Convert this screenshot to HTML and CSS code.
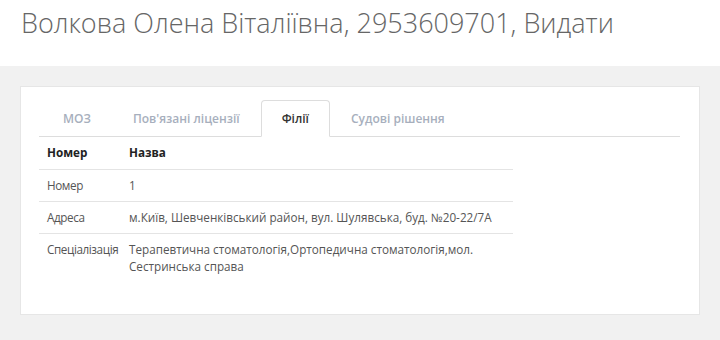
FILE: index.html
```html
<!DOCTYPE html>
<html lang="uk">
<head>
    <meta charset="UTF-8">
    <meta name="viewport" content="width=device-width, initial-scale=1.0">
    <title>Волкова Олена Віталіївна</title>
    <link rel="stylesheet" href="styles.css">
</head>
<body>
    <!-- Page header -->
    <div class="page-header">
        <h1>Волкова Олена Віталіївна, 2953609701, Видати</h1>
    </div>

    <div class="content">
        <div class="panel">
            <!-- Tabs -->
            <ul class="tabs">
                <li><a href="#">МОЗ</a></li>
                <li><a href="#">Пов'язані ліцензії</a></li>
                <li class="active"><a href="#">Філії</a></li>
                <li><a href="#">Судові рішення</a></li>
            </ul>

            <table class="info-table">
                <colgroup>
                    <col class="label-col">
                    <col>
                </colgroup>
                <thead>
                    <tr>
                        <th>Номер</th>
                        <th>Назва</th>
                    </tr>
                </thead>
                <tbody>
                    <tr>
                        <td>Номер</td>
                        <td>1</td>
                    </tr>
                    <tr>
                        <td>Адреса</td>
                        <td>м.Київ, Шевченківський район, вул. Шулявська, буд. №20-22/7А</td>
                    </tr>
                    <tr>
                        <td>Спеціалізація</td>
                        <td>Терапевтична стоматологія,Ортопедична стоматологія,мол. Сестринська справа</td>
                    </tr>
                </tbody>
            </table>
        </div>
    </div>
</body>
</html>
```
FILE: styles.css
```css
body {
    margin: 0;
    padding: 0;
    font-family: "Open Sans", Arial, sans-serif;
    background-color: #f1f1f1;
    color: #555;
}
.page-header {
    background-color: #fff;
    height: 66px;
    padding: 0 21px;
    box-sizing: border-box;
}
.page-header h1 {
    margin: 0;
    padding-top: 4px;
    font-size: 27px;
    font-weight: 300;
    color: #666;
    line-height: 38px;
}
.content {
    padding: 20px 20px 24px 20px;
}
.panel {
    background-color: #fff;
    border: 1px solid #e6e6e6;
    padding: 13px 19px 32px 18px;
}

/* Tabs */
.tabs {
    list-style: none;
    margin: 0;
    padding: 0 0 0 3px;
    display: flex;
    border-bottom: 1px solid #ddd;
}
.tabs li {
    margin-bottom: -1px;
}
.tabs a {
    display: block;
    height: 35px;
    line-height: 35px;
    padding: 0 20px;
    font-size: 12px;
    font-weight: 600;
    color: #a7afbd;
    text-decoration: none;
    border: 1px solid transparent;
    border-radius: 4px 4px 0 0;
}
.tabs .active a {
    color: #333;
    background-color: #fff;
    border-color: #ddd #ddd transparent #ddd;
}

/* Table */
.info-table {
    width: 74%;
    table-layout: fixed;
    border-collapse: collapse;
    font-size: 11.7px;
    line-height: 17px;
}
.info-table .label-col {
    width: 82px;
}
.info-table th,
.info-table td {
    text-align: left;
    vertical-align: top;
    padding: 7px 8px;
    border-bottom: 1px solid #e4e4e4;
}
.info-table td:first-child {
    white-space: nowrap;
    letter-spacing: -0.4px;
}
.info-table th {
    color: #222;
    font-weight: 700;
    padding-bottom: 8px;
}
.info-table tbody tr:last-child td {
    border-bottom: none;
}
```
